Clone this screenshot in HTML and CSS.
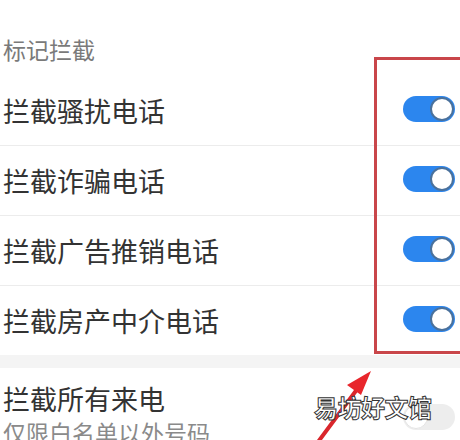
FILE: index.html
```html
<!DOCTYPE html>
<html lang="zh">
<head>
<meta charset="utf-8">
<link rel="stylesheet" href="styles.css">
</head>
<body>
<div class="page">
  <div class="section-title">标记拦截</div>
  <div class="group">
    <div class="row"><span class="label">拦截骚扰电话</span><span class="switch on"><span class="knob"></span></span></div>
    <div class="row"><span class="label">拦截诈骗电话</span><span class="switch on"><span class="knob"></span></span></div>
    <div class="row"><span class="label">拦截广告推销电话</span><span class="switch on"><span class="knob"></span></span></div>
    <div class="row"><span class="label">拦截房产中介电话</span><span class="switch on"><span class="knob"></span></span></div>
  </div>
  <div class="band"></div>
  <div class="row tall">
    <div class="texts">
      <div class="label">拦截所有来电</div>
      <div class="sub">仅限白名单以外号码</div>
    </div>
    <span class="switch off"><span class="knob"></span></span>
  </div>

  <div class="highlight"></div>
  <svg class="arrow" width="460" height="440" viewBox="0 0 460 440">
    <line x1="318" y1="442" x2="358" y2="388" stroke="#d9262c" stroke-width="4" stroke-linecap="round"/>
    <polygon points="371,371 347,385 361,395" fill="#e8262c"/>
  </svg>
  <div class="watermark">易坊好文馆</div>
</div>
</body>
</html>
```
FILE: styles.css
```css
html, body {
  margin: 0;
  padding: 0;
  background: #ffffff;
}
.page {
  position: relative;
  width: 460px;
  height: 440px;
  overflow: hidden;
  font-family: "Noto Sans CJK SC", "Noto Sans", sans-serif;
  background: #ffffff;
}
.section-title {
  height: 76px;
  box-sizing: border-box;
  padding: 34px 0 0 3px;
  font-size: 23px;
  line-height: 30px;
  color: #7a7a7a;
}
.row {
  display: flex;
  align-items: center;
  justify-content: space-between;
  height: 70px;
  box-sizing: border-box;
  padding: 0 5px 0 3px;
}
.group .row {
  border-bottom: 1px solid #ececec;
}
.group .row:last-child {
  border-bottom: none;
  height: 69px;
}
.label {
  font-size: 27px;
  line-height: 32px;
  color: #333333;
}
.band {
  height: 13px;
  background: #f4f4f4;
}
.row.tall {
  align-items: flex-start;
  height: 90px;
  padding-top: 16px;
}
.row.tall .label {
  line-height: 30px;
}
.sub {
  margin-top: 3px;
  font-size: 23px;
  line-height: 30px;
  color: #8a8a8a;
}
.switch {
  position: relative;
  flex: none;
  width: 52px;
  height: 26px;
  border-radius: 13px;
  display: flex;
  align-items: center;
  justify-content: flex-end;
  box-sizing: border-box;
  padding: 0 1px;
}
.switch.on {
  background: #2c86ee;
  margin-top: -3px;
}
.switch.off {
  background: #ededed;
  margin-top: 20px;
  justify-content: flex-start;
}
.knob {
  width: 24px;
  height: 24px;
  border-radius: 50%;
  background: #ffffff;
  box-sizing: border-box;
  border: 2px solid #4a719c;
}
.switch.off .knob {
  border: 1px solid #e4e4e4;
}
.highlight {
  position: absolute;
  left: 374px;
  top: 57px;
  width: 100px;
  height: 297px;
  box-sizing: border-box;
  border: 3px solid #c9464a;
}
.arrow {
  position: absolute;
  left: 0;
  top: 0;
}
.watermark {
  position: absolute;
  left: 314px;
  top: 392px;
  font-size: 24px;
  line-height: 30px;
  color: #ffffff;
  -webkit-text-stroke: 1px #333333;
  font-weight: bold;
  letter-spacing: -0.5px;
}
```
